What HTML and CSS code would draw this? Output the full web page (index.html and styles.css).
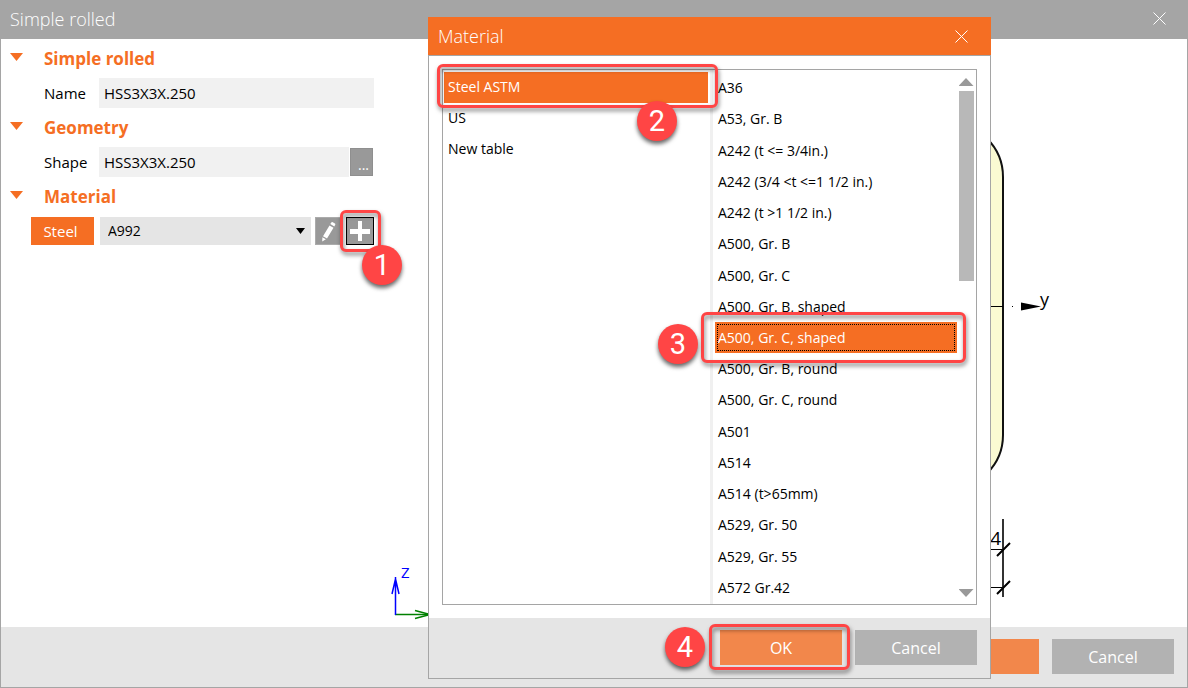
FILE: index.html
```html
<!DOCTYPE html>
<html lang="en">
<head>
    <meta charset="UTF-8">
    <meta name="viewport" content="width=device-width, initial-scale=1.0">
    <title>Simple rolled</title>
    <link rel="stylesheet" href="styles.css">
</head>
<body>
    <div class="window">
        <header class="titlebar">
            <h1>Simple rolled</h1>
            <button class="close" aria-label="Close">
                <svg width="13" height="13" viewBox="0 0 13 13"><path d="M.5 .5l12 12M12.5 .5l-12 12"/></svg>
            </button>
        </header>

        <main class="content">
            <form class="properties">
                <h2>Simple rolled</h2>
                <div class="row">
                    <label for="name">Name</label>
                    <input id="name" type="text" value="HSS3X3X.250">
                </div>

                <h2>Geometry</h2>
                <div class="row">
                    <label for="shape">Shape</label>
                    <input id="shape" type="text" value="HSS3X3X.250">
                    <button type="button" class="more" aria-label="Browse shapes">...</button>
                </div>

                <h2>Material</h2>
                <div class="row material-row">
                    <label class="steel" for="material">Steel</label>
                    <div class="select">
                        <select id="material">
                            <option>A992</option>
                        </select>
                    </div>
                    <button type="button" class="tool" aria-label="Edit material">
                        <svg width="24" height="26" viewBox="0 0 24 26">
                            <path d="M13.500 7.500l4 2.300-6.500 10.700-4-2.300zM14.300 6.100l1-1.600q.6-.8 1.500-.3l2.100 1.200q.8.500.3 1.400l-.9 1.600zM6.400 19.200l3.500 2-3.700 2.400z"/>
                        </svg>
                    </button>
                    <div class="marked add-wrap">
                        <button type="button" class="tool add" aria-label="Add material">
                            <svg width="26" height="26" viewBox="0 0 26 26"><path d="M11 3h4v8h8v5h-8v7h-4v-7H3v-5h8z"/></svg>
                        </button>
                        <span class="frame frame-add"></span>
                        <span class="badge badge-add">1</span>
                    </div>
                </div>
            </form>

            <svg class="drawing" viewBox="0 0 807 588" preserveAspectRatio="xMinYMin meet">
                <!-- cross-section -->
                <rect class="section" x="257" y="84" width="366" height="366" rx="54"/>
                <path class="thin" d="M257 267.500H623M632 267.500h1"/>
                <path class="arrow" d="M641 263.500v8l20-4z"/>
                <text x="660" y="267" font-size="18">y</text>
                <!-- dimension lines -->
                <path class="thin" d="M257 510.500H623M257 548.500H623"/>
                <path class="dim" d="M623 480v78"/>
                <path class="tick" d="M617 517l13-13M617 555l13-13"/>
                <text x="621" y="506" font-size="19" text-anchor="end">1/4</text>
                <!-- axes -->
                <g class="axis-y"><path d="M15 575.500h38"/><path d="M35 571.500l15 4-15 4"/></g>
                <g class="axis-z"><path d="M15.500 576v-38M12 555l3.500-15 3.500 15"/></g>
                <text class="label-z" x="21" y="539" font-size="15">Z</text>
            </svg>
        </main>

        <footer class="actions">
            <button class="btn primary">OK</button>
            <button class="btn">Cancel</button>
        </footer>
    </div>

    <section class="dialog" role="dialog" aria-labelledby="dialog-title">
        <header class="dialog-title">
            <h1 id="dialog-title">Material</h1>
            <button class="close" aria-label="Close">
                <svg width="13" height="13" viewBox="0 0 13 13"><path d="M.5 .5l12 12M12.5 .5l-12 12"/></svg>
            </button>
        </header>

        <div class="lists">
            <ul class="tables">
                <li class="marked">
                    <button class="item selected">Steel ASTM</button>
                    <span class="frame frame-table"></span>
                    <span class="badge badge-table">2</span>
                </li>
                <li><button class="item">US</button></li>
                <li><button class="item">New table</button></li>
            </ul>
            <ul class="grades">
                <li><button class="item">A36</button></li>
                <li><button class="item">A53, Gr. B</button></li>
                <li><button class="item">A242 (t &lt;= 3/4in.)</button></li>
                <li><button class="item">A242 (3/4 &lt;t &lt;=1 1/2 in.)</button></li>
                <li><button class="item">A242 (t &gt;1 1/2 in.)</button></li>
                <li><button class="item">A500, Gr. B</button></li>
                <li><button class="item">A500, Gr. C</button></li>
                <li><button class="item">A500, Gr. B, shaped</button></li>
                <li class="marked">
                    <button class="item selected focused">A500, Gr. C, shaped</button>
                    <span class="frame frame-grade"></span>
                    <span class="badge badge-grade">3</span>
                </li>
                <li><button class="item">A500, Gr. B, round</button></li>
                <li><button class="item">A500, Gr. C, round</button></li>
                <li><button class="item">A501</button></li>
                <li><button class="item">A514</button></li>
                <li><button class="item">A514 (t&gt;65mm)</button></li>
                <li><button class="item">A529, Gr. 50</button></li>
                <li><button class="item">A529, Gr. 55</button></li>
                <li><button class="item">A572 Gr.42</button></li>
            </ul>
            <div class="scrollbar">
                <span class="up"></span>
                <span class="thumb"></span>
                <span class="down"></span>
            </div>
        </div>

        <footer class="dialog-actions">
            <div class="marked">
                <button class="btn primary">OK</button>
                <span class="frame frame-ok"></span>
                <span class="badge badge-ok">4</span>
            </div>
            <button class="btn">Cancel</button>
        </footer>
    </section>
</body>
</html>
```
FILE: styles.css
```css
:root {
    --orange: #f56e23;
    --orange-light: #f2874b;
    --grey: #a5a5a5;
    --grey-button: #b2b2b2;
    --footer: #e5e5e5;
    --field: #f1f1f1;
    --mark: #ff4545;
}

* {
    margin: 0;
    padding: 0;
    box-sizing: border-box;
}

body {
    position: relative;
    background: #fff;
}

body, button, input, select {
    font-family: 'Open Sans', 'Noto Sans', sans-serif;
    font-size: 14px;
    color: #000;
}

button, input, select {
    border: none;
    border-radius: 0;
    outline: none;
}

ul {
    list-style: none;
}

/* main window */
.window {
    display: flex;
    flex-direction: column;
    min-height: 100vh;
    border: 1px solid var(--grey);
    border-top: none;
}

.titlebar, .dialog-title {
    display: flex;
    align-items: center;
    justify-content: space-between;
    color: #fff;
}

.titlebar {
    height: 39px;
    padding: 0 21px 2px 9px;
    background: var(--grey);
}

h1 {
    font-size: 18px;
    font-weight: 300;
}

.close {
    display: flex;
    background: none;
}

.close path {
    stroke: #fff;
    fill: none;
}

.content {
    flex: 1;
    display: grid;
    grid-template-columns: 379px 1fr;
}

.properties {
    padding-right: 6px;
}

h2 {
    display: flex;
    align-items: center;
    height: 39px;
    padding-left: 9px;
    font-size: 17px;
    font-weight: 700;
    color: var(--orange);
}

h2::before {
    content: "";
    width: 13px;
    height: 8px;
    margin: 0 21px 3px 0;
    background: var(--orange);
    clip-path: polygon(0 0, 100% 0, 50% 100%);
}

.row {
    display: flex;
    align-items: center;
    height: 30px;
    padding-left: 43px;
}

.row label {
    width: 55px;
    font-size: 15px;
}

.row input {
    flex: 1;
    min-width: 0;
    height: 30px;
    padding: 0 5px;
    background: var(--field);
    font-size: 15px;
}

.more {
    width: 23px;
    height: 28px;
    margin: 0 1px;
    padding: 4px 0 0 4px;
    border: 1px solid #b4b4b4;
    outline: 1px solid #8f8f8f;
    outline-offset: -1px;
    background: #999;
    color: #fff;
}

.material-row {
    padding-left: 30px;
}

.row .steel {
    width: 63px;
    line-height: 28px;
    margin-right: 6px;
    padding-right: 4px;
    text-align: center;
    background: var(--orange);
    color: #fff;
}

.select {
    position: relative;
    flex: 1;
}

.select select {
    display: block;
    width: 100%;
    height: 28px;
    padding: 0 8px 2px;
    appearance: none;
    background: var(--footer);
}

.select::after {
    content: "";
    position: absolute;
    top: 11px;
    right: 6px;
    width: 9px;
    height: 6px;
    background: #000;
    clip-path: polygon(0 0, 100% 0, 50% 100%);
}

.tool {
    display: flex;
    align-items: center;
    justify-content: center;
    width: 26px;
    height: 28px;
    margin-left: 4px;
    border: 1px solid #ababab;
    background: #999;
}

.tool svg {
    flex: none;
    fill: #fff;
}

.add-wrap {
    margin-left: 5px;
}

.tool.add {
    width: 28px;
    margin: 0;
    border-color: #000;
}

.drawing {
    width: 100%;
    height: 100%;
}

.section {
    fill: #fafad2;
    stroke: #111;
    stroke-width: 2;
}

.thin {
    stroke: #000;
}

.dim {
    stroke: #333;
    stroke-width: 2;
}

.tick {
    stroke: #000;
    stroke-width: 2;
}

.axis-y {
    fill: none;
    stroke: green;
    stroke-width: 1.500;
}

.axis-z {
    fill: none;
    stroke: #00f;
    stroke-width: 1.500;
}

.label-z {
    fill: #00f;
}

.actions, .dialog-actions {
    display: flex;
    justify-content: flex-end;
    gap: 13px;
    padding: 12px 13px 13px;
    background: var(--footer);
}

.btn {
    display: block;
    width: 122px;
    height: 35px;
    background: var(--grey-button);
    color: #fff;
    font-size: 16px;
}

.btn.primary {
    background: var(--orange-light);
}

/* material dialog */
.dialog {
    position: absolute;
    top: 17px;
    left: 428px;
    width: 563px;
    border: 1px solid var(--grey);
    border-top: none;
    background: #fff;
}

.dialog-title {
    height: 39px;
    margin: 0 -1px;
    padding: 0 23px 0 10px;
    border-bottom: 1px solid var(--grey);
    background: var(--orange);
}

.lists {
    display: flex;
    margin: 13px;
    border: 1px solid var(--grey);
}

.tables {
    width: 270px;
    padding: 2px 2px 0 1px;
    border-right: 3px solid #f0f0f0;
}

.tables li {
    height: 31px;
}

.tables .item {
    padding: 0 4px 2px;
}

.grades {
    display: grid;
    grid-auto-rows: 1fr;
    flex: 1;
    height: 534px;
    padding: 2px 0 1px 2px;
}

.item {
    display: block;
    width: 100%;
    height: 100%;
    padding: 0 3px;
    text-align: left;
    background: none;
}

.item.selected {
    background: var(--orange);
    color: #fff;
}

.item.focused {
    outline: 1px dotted #000;
    outline-offset: -3px;
}

.scrollbar {
    display: flex;
    flex-direction: column;
    align-items: center;
    width: 19px;
    padding: 8px 2px 7px 1px;
}

.up, .down {
    width: 15px;
    height: 8px;
    background: #999;
}

.up {
    clip-path: polygon(50% 0, 100% 100%, 0 100%);
}

.down {
    margin-top: auto;
    clip-path: polygon(0 0, 100% 0, 50% 100%);
}

.thumb {
    width: 15px;
    height: 190px;
    margin-top: 5px;
    background: #b8b8b8;
}

/* numbered marks over the controls */
.marked {
    position: relative;
}

.frame, .badge {
    position: absolute;
    z-index: 1;
    pointer-events: none;
}

.frame {
    border: 3px solid var(--mark);
    border-radius: 6px;
    filter: drop-shadow(1px 3px 2px rgba(0, 0, 0, 0.5));
}

.badge {
    width: 40px;
    height: 40px;
    border-radius: 50%;
    background: var(--mark);
    box-shadow: 0 3px 4px rgba(0, 0, 0, 0.6);
    color: #fff;
    font-family: Roboto, 'Liberation Sans', sans-serif;
    font-size: 29px;
    line-height: 40px;
    text-align: center;
}

.frame-add {
    inset: -7px -7px -7px -6px;
}

.badge-add {
    top: 28px;
    left: 16px;
}

.frame-table {
    inset: -8px -10px -5px -7px;
}

.badge-table {
    top: 29px;
    right: 31px;
}

.frame-grade {
    inset: -10px -9px -10px -14px;
}

.badge-grade {
    top: 2px;
    left: -57px;
}

.frame-ok {
    inset: -6px -8px -5px -11px;
}

.badge-ok {
    top: -3px;
    left: -55px;
}
```
